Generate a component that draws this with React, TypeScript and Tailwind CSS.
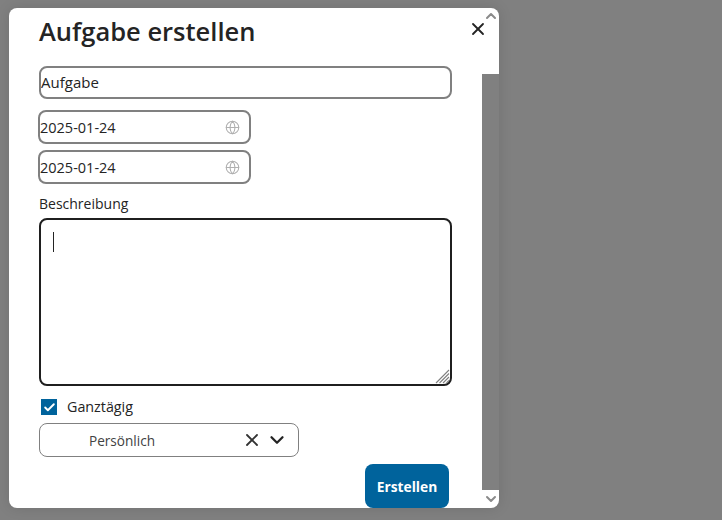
import React from 'react';
import { ChevronDown, ChevronUp, Check, Globe, X } from 'lucide-react';

const DateField: React.FC<{ value: string }> = ({ value }) => (
  <div className="-ml-px flex h-[34px] w-[213px] items-center justify-between rounded-lg border-2 border-[#808080] pr-[9px]">
    <span className="mt-px text-[14.5px] text-[#242424]">{value}</span>
    <Globe className="h-[15px] w-[15px] text-[#b0b0b0]" strokeWidth={1.7} />
  </div>
);

export default function App() {
  return (
    <div className="h-[520px] w-[722px] overflow-hidden bg-[#808080] pl-[9px] pt-2 font-['Open_Sans','Noto_Sans',sans-serif]">
      <div className="relative flex h-[500px] w-[490px] overflow-hidden rounded-lg bg-white shadow-[0_0_14px_rgba(0,0,0,0.12)]">
        {/* Formular */}
        <div className="w-[473px] pl-[30px]">
          <h1 className="mt-1.5 h-[35px] text-[25.5px] font-semibold leading-[34px] text-[#242424]">Aufgabe erstellen</h1>
          <input
            readOnly
            value="Aufgabe"
            className="mt-[17px] block h-[33px] w-[413px] rounded-lg border-2 border-[#808080] pb-px text-[15px] text-[#242424] outline-none"
          />
          <div className="mt-[11px] flex flex-col gap-1.5">
            <DateField value="2025-01-24" />
            <DateField value="2025-01-24" />
          </div>
          <label className="mt-2.5 block h-[20px] text-[14px] leading-[20px] text-[#242424]">Beschreibung</label>
          <div className="relative mt-1 h-[168px] w-[413px]">
            <textarea className="block h-full w-full resize-none rounded-lg border-2 border-[#1f1f1f] outline-none" />
            <span className="absolute left-[14px] top-[14px] h-[20px] w-px bg-[#242424]" />
            <svg className="absolute bottom-[2px] right-[2px] h-[15px] w-[15px] text-[#808080]" viewBox="0 0 15 15" fill="none" stroke="currentColor" strokeWidth="1.1">
              <path d="M1 14 14 1M4.5 14 14 4.5M8 14 14 8M11.500 14 14 11.500" />
            </svg>
          </div>
          <div className="ml-0.5 mt-[13px] flex h-4 items-center gap-2.5">
            <span className="flex h-4 w-4 items-center justify-center bg-[#00639c]">
              <Check className="h-[13px] w-[13px] text-white" strokeWidth={3.5} />
            </span>
            <span className="text-[14.3px] text-[#242424]">Ganztägig</span>
          </div>
          <div className="mt-2 flex h-[34px] w-[260px] items-center rounded-lg border border-[#808080] pl-[49px] pr-2.5">
            <span className="mt-0.5 flex-1 text-[13.6px] text-[#424242]">Persönlich</span>
            <X className="h-[20px] w-[20px] text-[#333333]" strokeWidth={2.2} />
            <ChevronDown className="ml-1 h-[22px] w-[22px] text-[#242424]" strokeWidth={2.5} />
          </div>
          <div className="mt-[7px] flex w-[410px] justify-end">
            <button className="h-[44px] w-[84px] rounded-lg bg-[#00639c] pt-0.5 text-[13.8px] font-bold text-white">Erstellen</button>
          </div>
        </div>

        {/* Scrollbar */}
        <div className="flex w-[17px] flex-col">
          <div className="flex h-[66px] justify-center">
            <ChevronUp className="h-[16px] w-[16px] text-[#8a8a8a]" strokeWidth={3} />
          </div>
          <div className="flex-1 bg-[#808080]" />
          <div className="flex h-[18px] items-center justify-center">
            <ChevronDown className="h-[16px] w-[16px] text-[#8a8a8a]" strokeWidth={3} />
          </div>
        </div>

        <button className="absolute left-[459px] top-[11px] text-[#242424]">
          <X className="h-[20px] w-[20px]" strokeWidth={2.2} />
        </button>
      </div>
    </div>
  );
}
